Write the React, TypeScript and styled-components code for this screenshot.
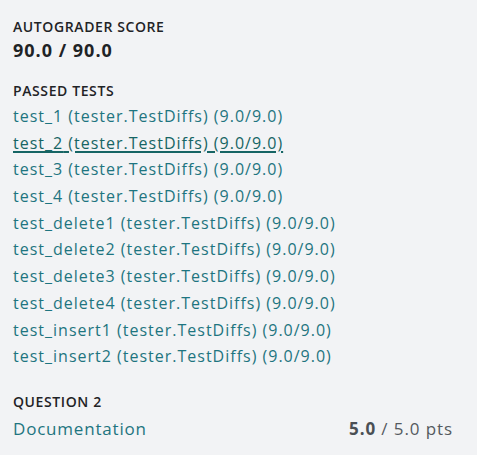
import React from "react";
import styled, { createGlobalStyle } from "styled-components";

const GlobalStyle = createGlobalStyle`
  html, body {
    margin: 0;
    padding: 0;
    background: #f2f3f5;
  }
  body {
    font-family: "Open Sans", Arial, sans-serif;
    color: #222;
  }
`;

const Panel = styled.div`
  width: 477px;
  height: 455px;
  box-sizing: border-box;
  padding: 18px 24px 0 13px;
  background: #f2f3f5;
`;

const Section = styled.section<{ $gap?: number }>`
  margin-bottom: ${({ $gap }) => $gap ?? 0}px;
`;

const Label = styled.div`
  font-size: 14px;
  font-weight: 600;
  line-height: 18px;
  color: #1f2326;
  text-transform: uppercase;
  letter-spacing: 0.6px;
`;

const Score = styled.div`
  margin-top: 2px;
  font-size: 18px;
  font-weight: 700;
  line-height: 24px;
  color: #1f2326;
  letter-spacing: 1px;
`;

const TestList = styled.ul`
  list-style: none;
  margin: 3px 0 0;
  padding: 0;
`;

const TestItem = styled.li`
  height: 26.7px;
  line-height: 26.7px;
`;

const TestLink = styled.a<{ $hover?: boolean }>`
  font-size: 16px;
  letter-spacing: 1px;
  color: ${({ $hover }) => ($hover ? "#166564" : "#1e7580")};
  text-decoration: ${({ $hover }) => ($hover ? "underline" : "none")};
  text-decoration-thickness: 2px;
  text-underline-offset: 2px;
  cursor: pointer;
`;

const QuestionRow = styled.div`
  display: flex;
  justify-content: space-between;
  align-items: baseline;
  margin-top: 6px;
`;

const QuestionTitle = styled.a`
  font-size: 17px;
  letter-spacing: 0.8px;
  color: #1e7580;
  text-decoration: none;
`;

const Points = styled.span`
  font-size: 17px;
  letter-spacing: 0.9px;
  color: #555a5f;
`;

const PointsEarned = styled.strong`
  font-weight: 700;
  color: #4a4f54;
`;

const tests = [
  "test_1",
  "test_2",
  "test_3",
  "test_4",
  "test_delete1",
  "test_delete2",
  "test_delete3",
  "test_delete4",
  "test_insert1",
  "test_insert2",
];

export default function App() {
  return (
    <>
      <GlobalStyle />
      <Panel>
        <Section $gap={20}>
          <Label>Autograder Score</Label>
          <Score>90.0 / 90.0</Score>
        </Section>
        <Section $gap={23}>
          <Label>Passed Tests</Label>
          <TestList>
            {tests.map((t) => (
              <TestItem key={t}>
                <TestLink $hover={t === "test_2"}>
                  {t} (tester.TestDiffs) (9.0/9.0)
                </TestLink>
              </TestItem>
            ))}
          </TestList>
        </Section>
        <Section>
          <Label>Question 2</Label>
          <QuestionRow>
            <QuestionTitle>Documentation</QuestionTitle>
            <Points>
              <PointsEarned>5.0</PointsEarned> / 5.0 pts
            </Points>
          </QuestionRow>
        </Section>
      </Panel>
    </>
  );
}
